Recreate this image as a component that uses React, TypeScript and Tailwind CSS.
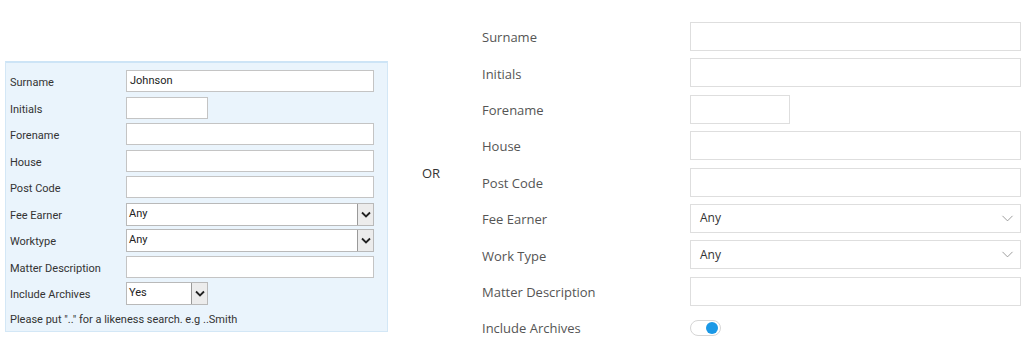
import { ChevronDown } from "lucide-react"

const classicRows = [
  { label: "Surname", kind: "text", value: "Johnson", width: "w-[248px]" },
  { label: "Initials", kind: "text", value: "", width: "w-[82px]" },
  { label: "Forename", kind: "text", value: "", width: "w-[248px]" },
  { label: "House", kind: "text", value: "", width: "w-[248px]" },
  { label: "Post Code", kind: "text", value: "", width: "w-[248px]" },
  { label: "Fee Earner", kind: "select", value: "Any", width: "w-[248px]" },
  { label: "Worktype", kind: "select", value: "Any", width: "w-[248px]" },
  { label: "Matter Description", kind: "text", value: "", width: "w-[248px]" },
  { label: "Include Archives", kind: "select", value: "Yes", width: "w-[82px]" },
]

const modernRows = [
  { label: "Surname", kind: "text", value: "", width: "w-[331px]" },
  { label: "Initials", kind: "text", value: "", width: "w-[331px]" },
  { label: "Forename", kind: "text", value: "", width: "w-[100px]" },
  { label: "House", kind: "text", value: "", width: "w-[331px]" },
  { label: "Post Code", kind: "text", value: "", width: "w-[331px]" },
  { label: "Fee Earner", kind: "select", value: "Any", width: "w-[331px]" },
  { label: "Work Type", kind: "select", value: "Any", width: "w-[331px]" },
  { label: "Matter Description", kind: "text", value: "", width: "w-[331px]" },
]

function ClassicField({ kind, value, width }: { kind: string; value: string; width: string }) {
  if (kind === "select") {
    return (
      <div className={`${width} h-[23px] flex border border-[#b9b9b9] bg-white`}>
        <div className="flex-1 flex items-center pl-[2px] text-[11px] text-[#222]">{value}</div>
        <div className="w-[16px] h-full flex items-center justify-center bg-[#ececec] border-l border-[#9a9a9a]">
          <svg width="10" height="7" viewBox="0 0 10 7">
            <path d="M1 1.5 L5 5.5 L9 1.5" fill="none" stroke="#222" strokeWidth="1.8" />
          </svg>
        </div>
      </div>
    )
  }
  return (
    <div className={`${width} h-[22px] flex items-center pl-[3px] border border-[#c4c4c4] bg-white text-[11px] text-[#222]`}>
      {value}
    </div>
  )
}

function ModernField({ kind, value, width }: { kind: string; value: string; width: string }) {
  return (
    <div className={`${width} h-[29px] flex items-center justify-between pl-[9px] pr-[3px] border border-[#dedede] bg-white text-[12px] text-[#333]`}>
      <span>{value}</span>
      {kind === "select" && <ChevronDown className="w-[19px] h-[19px] text-[#8f8f8f]" strokeWidth={1.1} />}
    </div>
  )
}

export default function App() {
  return (
    <main className="w-[1024px] h-[362px] bg-white flex overflow-hidden">
      {/* old style search panel */}
      <div
        className="ml-[5px] mt-[61px] w-[383px] h-[271px] bg-[#eaf4fc] border-l border-b border-r border-[#d3e7f6] border-t-2 border-t-[#cde4f6] pl-[4px] pt-[7px] flex flex-col"
        style={{ fontFamily: "Roboto, 'Liberation Sans', sans-serif" }}
      >
        {classicRows.map((r) => (
          <div key={r.label} className="h-[26.5px] flex items-start">
            <div className="w-[116px] h-[22px] flex items-center pt-[5px] text-[11px] text-[#333]">{r.label}</div>
            <ClassicField kind={r.kind} value={r.value} width={r.width} />
          </div>
        ))}
        <div className="pt-[3px] text-[11px] text-[#333]">Please put ".." for a likeness search. e.g ..Smith</div>
      </div>

      {/* divider */}
      <div
        className="w-[94px] flex items-center pl-[34px] pb-[14px] text-[13px] text-[#333]"
        style={{ fontFamily: "'Open Sans', 'Noto Sans', sans-serif" }}
      >
        OR
      </div>

      {/* new style form */}
      <div className="pt-[22px] flex flex-col" style={{ fontFamily: "'Open Sans', 'Noto Sans', sans-serif" }}>
        {modernRows.map((r) => (
          <div key={r.label} className="h-[36.4px] flex items-start">
            <div className="w-[208px] h-[29px] flex items-center pt-[3px] text-[13px] text-[#555]">{r.label}</div>
            <ModernField kind={r.kind} value={r.value} width={r.width} />
          </div>
        ))}
        <div className="h-[29px] flex items-center">
          <div className="w-[208px] pt-[3px] text-[13px] text-[#555]">Include Archives</div>
          <div className="w-[31px] h-[16px] rounded-full border border-[#d6d6d6] bg-white flex items-center justify-end pr-[2px]">
            <div className="w-[12px] h-[12px] rounded-full bg-[#1a98e6]" />
          </div>
        </div>
      </div>
    </main>
  )
}
